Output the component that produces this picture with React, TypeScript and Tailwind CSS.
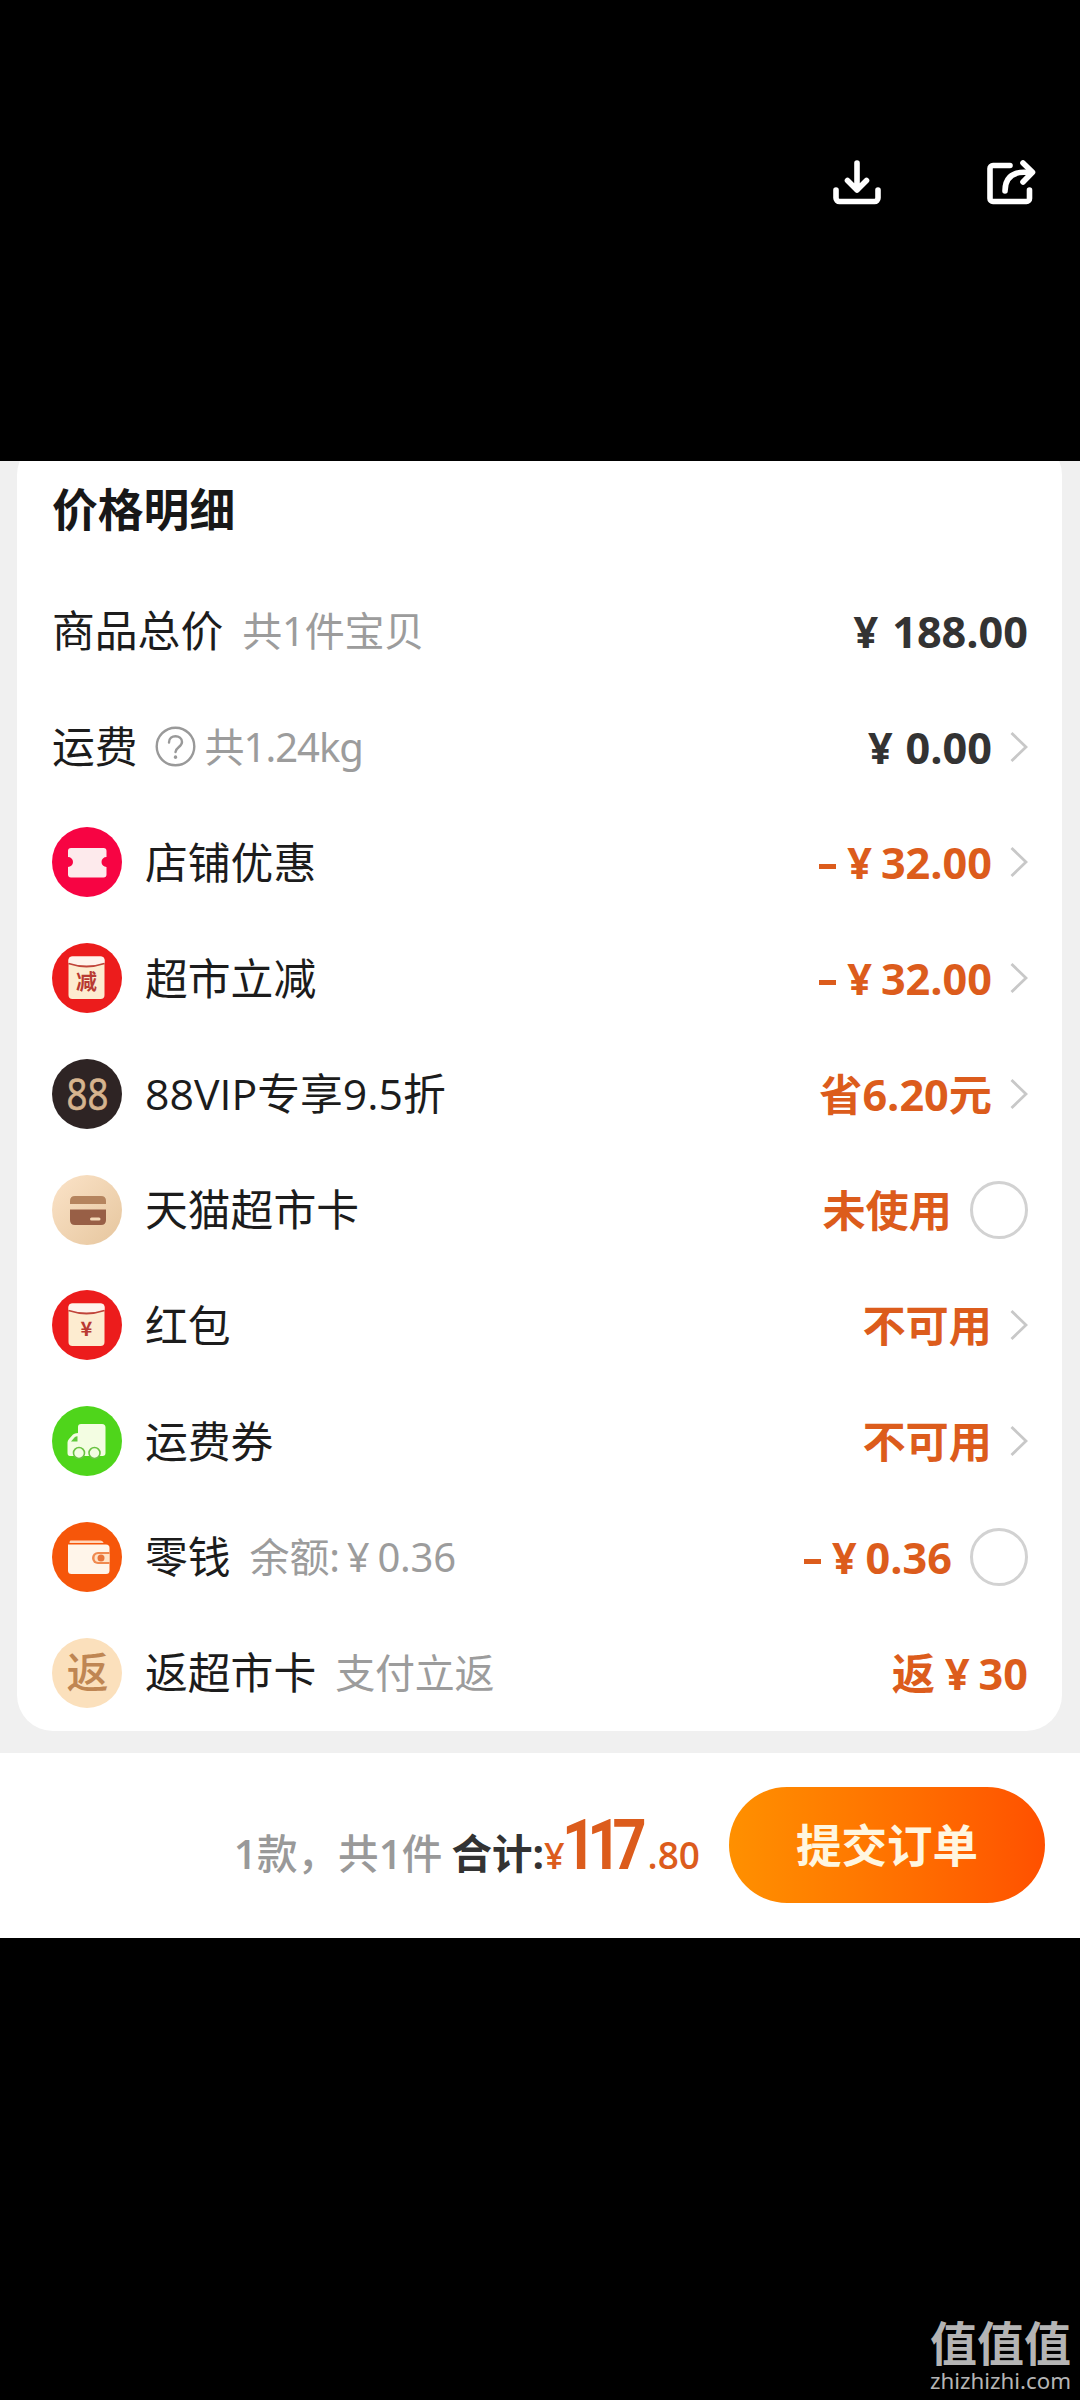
import type { ReactNode } from 'react'

type Row = {
  icon?: ReactNode
  label: string
  help?: boolean
  hint?: ReactNode
  value: ReactNode
  dark?: boolean
  end?: 'arrow' | 'radio'
}

const cjk = '"Noto Sans CJK SC", sans-serif'

function DownloadIcon() {
  return (
    <svg className="size-14" viewBox="0 0 56 56" fill="none" stroke="#fff" strokeWidth="5.6" strokeLinecap="round" strokeLinejoin="round">
      <path d="M28 8v27M18.500 25.500 28 35l9.500-9.500" />
      <path d="M7 35v8a3.500 3.500 0 0 0 3.500 3.500h35a3.500 3.500 0 0 0 3.500-3.500V35" />
    </svg>
  )
}

function ShareIcon() {
  return (
    <svg className="size-14" viewBox="0 0 56 56" fill="none" stroke="#fff" strokeWidth="5.6" strokeLinecap="round" strokeLinejoin="round">
      <path d="M28 10.500H11a3 3 0 0 0-3 3V43.500a3 3 0 0 0 3 3h33.500a3 3 0 0 0 3-3V35" />
      <path d="M23 36C23 24 29.500 17.200 42 17.200h7.500" />
      <path d="M41 8l9.500 9.200L41 27" />
    </svg>
  )
}

function TicketIcon() {
  return (
    <svg className="size-[70px]" viewBox="0 0 70 70">
      <circle cx="35" cy="35" r="35" fill="#f70443" />
      <path d="M19 21h32.500q3 0 3 3v6a5 5 0 0 0 0 10v7.500q0 3-3 3H19q-3 0-3-3V40a5 5 0 0 0 0-10v-6q0-3 3-3Z" fill="#fdeaec" />
    </svg>
  )
}

function EnvelopeIcon({ mark, size }: { mark: string; size: number }) {
  return (
    <svg className="size-[70px]" viewBox="0 0 70 70">
      <circle cx="35" cy="35" r="35" fill="#ec1c1c" />
      <rect x="16.500" y="13.500" width="36" height="42.500" rx="4" fill="#fdecd0" />
      <path d="M16.500 20v-2.500q0-4 4-4h28q4 0 4 4V20q-18 6-36 0Z" fill="#fff3ec" />
      <path d="M16.500 20.500q18 6 36 0" fill="none" stroke="#c0443a" strokeWidth="1.800" />
      <text x="34.500" y="45.500" textAnchor="middle" fontSize={size} fontWeight="700" fontFamily={cjk} fill="#b93a32">
        {mark}
      </text>
    </svg>
  )
}

function VipIcon() {
  return (
    <svg className="size-[70px]" viewBox="0 0 70 70">
      <circle cx="35" cy="35" r="35" fill="#2e2424" />
      <text x="14.500" y="50.500" fontSize="43" fontWeight="500" textLength="42" lengthAdjust="spacingAndGlyphs" fontFamily='"Open Sans", sans-serif' fill="#d6b48e" stroke="#d6b48e" strokeWidth="0.700">
        88
      </text>
    </svg>
  )
}

function CardIcon() {
  return (
    <svg className="size-[70px]" viewBox="0 0 70 70">
      <defs>
        <linearGradient id="card-bg" x1="0" y1="0" x2="1" y2="1">
          <stop offset="0" stopColor="#fbe3c8" />
          <stop offset="1" stopColor="#e6c69e" />
        </linearGradient>
      </defs>
      <circle cx="35" cy="35" r="35" fill="url(#card-bg)" />
      <path d="M18 29v-3q0-5 5-5h26q5 0 5 5v3Z" fill="#b5845e" />
      <path d="M18 34.500h36V45q0 5-5 5H23q-5 0-5-5Z" fill="#985f46" />
      <path d="M39.500 44H47" stroke="#f3d9b8" strokeWidth="3" strokeLinecap="round" />
    </svg>
  )
}

function TruckIcon() {
  return (
    <svg className="size-[70px]" viewBox="0 0 70 70">
      <circle cx="35" cy="35" r="35" fill="#4fd51b" />
      <path d="M29 18h21q3.500 0 3.500 3.500V47q0 3-3 3H18q-2.500 0-2.500-3V36.500q0-2 1.500-3.500l4-4.500q1.500-1.500 5-1.500V21q0-3 3-3Z" fill="#f3fde2" />
      <path d="M19 35.500l3.500-4q1.200-1.300 3-1.300v5.300Z" fill="#5fc93c" />
      <circle cx="27" cy="47" r="5.500" fill="#f3fde2" stroke="#69c243" strokeWidth="1.600" />
      <circle cx="42.500" cy="47" r="5.500" fill="#f3fde2" stroke="#69c243" strokeWidth="1.600" />
    </svg>
  )
}

function WalletIcon() {
  return (
    <svg className="size-[70px]" viewBox="0 0 70 70">
      <circle cx="35" cy="35" r="35" fill="#f6560a" />
      <path d="M18.500 18.500H48q3 0 3.500 2.500H17.500q0-2.500 1-2.500Z" fill="#ffd6bb" />
      <path d="M16 22.500h38q3.500 0 3.500 3.500v22.500q0 3.500-3.500 3.500H19.500q-3.500 0-3.500-3.500Z" fill="#fff5ea" />
      <path d="M57.500 30H46a6 6 0 0 0 0 12h11.500Z" fill="#f08a50" />
      <path d="M57.500 32H46.500a4 4 0 0 0 0 8h11Z" fill="#ffe3c8" />
      <circle cx="49" cy="36" r="3.500" fill="#e8743a" />
    </svg>
  )
}

function RebateIcon() {
  return (
    <svg className="size-[70px]" viewBox="0 0 70 70">
      <circle cx="35" cy="35" r="35" fill="#fbe0bc" />
      <text x="35.500" y="50" textAnchor="middle" fontSize="42" fontWeight="500" fontFamily={cjk} fill="#bf8653">
        返
      </text>
    </svg>
  )
}

function HelpIcon() {
  return (
    <svg className="ml-[17px] size-[41px]" viewBox="0 0 41 41" fill="none" stroke="#999" strokeWidth="2.400" strokeLinecap="round">
      <circle cx="20.500" cy="20.500" r="18.800" />
      <path d="M14 16.500c0-8.500 13-8 13-.5 0 5-6.500 5.500-6.500 10" />
      <path d="M20.500 31v.3" strokeWidth="3.400" />
    </svg>
  )
}

function Arrow() {
  return (
    <svg className="ml-[18px] h-[32px] w-[18px]" viewBox="0 0 18 32" fill="none" stroke="#c8c8c8" strokeWidth="2.800">
      <path d="M1.500 2 16 16 1.500 30" />
    </svg>
  )
}

function Price({ minus, yuan = 'mr-[9px]', children }: { minus?: boolean; yuan?: string; children: ReactNode }) {
  return (
    <>
      {minus && <span className="mr-[11px] mb-[6px] h-[5px] w-[17px] translate-y-[7px] self-center bg-[#dc5c1c]" />}
      <span className={yuan}>¥</span>
      <span>{children}</span>
    </>
  )
}

const rows: Row[] = [
  { label: '商品总价', hint: '共1件宝贝', value: <Price yuan="mr-[14px]">188.00</Price>, dark: true },
  { label: '运费', help: true, hint: '共1.24kg', value: <Price yuan="mr-[13px]">0.00</Price>, dark: true, end: 'arrow' },
  { icon: <TicketIcon />, label: '店铺优惠', value: <Price minus>32.00</Price>, end: 'arrow' },
  { icon: <EnvelopeIcon mark="减" size={21} />, label: '超市立减', value: <Price minus>32.00</Price>, end: 'arrow' },
  { icon: <VipIcon />, label: '88VIP专享9.5折', value: '省6.20元', end: 'arrow' },
  { icon: <CardIcon />, label: '天猫超市卡', value: '未使用', end: 'radio' },
  { icon: <EnvelopeIcon mark="¥" size={20} />, label: '红包', value: '不可用', end: 'arrow' },
  { icon: <TruckIcon />, label: '运费券', value: '不可用', end: 'arrow' },
  {
    icon: <WalletIcon />,
    label: '零钱',
    hint: (
      <>
        余额:<span className="mr-[8px] ml-[7px]">¥</span>0.36
      </>
    ),
    value: <Price minus>0.36</Price>,
    end: 'radio',
  },
  {
    icon: <RebateIcon />,
    label: '返超市卡',
    hint: '支付立返',
    value: (
      <>
        <span className="mr-[10px]">返</span>
        <Price>30</Price>
      </>
    ),
  },
]

function DetailRow({ icon, label, help, hint, value, dark, end }: Row) {
  return (
    <div className="flex h-[115.75px] items-center">
      {icon && <div className="mr-[23px] shrink-0">{icon}</div>}
      <span className="pt-[2px] text-[42.800px] leading-none text-[#1c1c1c]">{label}</span>
      {help && <HelpIcon />}
      {hint && (
        <span
          className={`pt-[1px] font-['Noto_Sans','Noto_Sans_CJK_SC',sans-serif] text-[40px] leading-none text-[#9c9c9c] ${help ? 'ml-[9px] tracking-[-1px]' : 'ml-[19px] tracking-[-0.2px]'}`}
        >
          {hint}
        </span>
      )}
      <div className={`ml-auto flex items-center pt-[1px] text-[43.200px] leading-none font-bold ${dark ? 'text-[#333]' : 'text-[#dc5c1c]'}`}>
        {value}
      </div>
      {end === 'arrow' && <Arrow />}
      {end === 'radio' && <span className="ml-[18px] size-[58px] rounded-full border-[3px] border-[#d2d2d2]" />}
    </div>
  )
}

export default function App() {
  return (
    <div className="flex h-[2400px] w-[1080px] flex-col overflow-hidden bg-black font-['Open_Sans','Noto_Sans_CJK_SC',sans-serif]">
      {/* Viewer toolbar */}
      <header className="flex h-[461px] shrink-0 items-start justify-end gap-[97px] pt-[155px] pr-[42px]">
        <DownloadIcon />
        <ShareIcon />
      </header>

      {/* Price details */}
      <main className="h-[1292px] shrink-0 overflow-hidden bg-[#f0f0f0]">
        <section className="-mt-[22px] mr-[18px] ml-[17px] rounded-[36px] bg-white pt-[22px] pr-[34px] pl-[35px]">
          <h1 className="flex h-[112px] items-start pt-[26px] text-[45.800px] leading-none font-bold text-[#181818]">价格明细</h1>
          {rows.map((row) => (
            <DetailRow key={row.label} {...row} />
          ))}
        </section>
      </main>

      {/* Order bar */}
      <footer className="flex h-[185px] shrink-0 items-start justify-end bg-white pt-[34px] pr-[35px]">
        <div className="flex h-[116px] items-baseline pt-[23px] leading-none">
          <span className="text-[40.600px] font-medium text-[#999]">
            <span className="font-semibold">1</span>款，共<span className="font-semibold">1</span>件
          </span>
          <span className="ml-[9px] text-[40.500px] font-bold text-[#333]">合计:</span>
          <span className="text-[36px] font-semibold text-[#dc5c1c]">¥</span>
          <span className="-ml-[3px] origin-left scale-x-85 font-['Roboto',sans-serif] text-[70px] font-bold tracking-[-10.500px] text-[#dc5c1c]">
            117
          </span>
          <span className="-ml-[3px] text-[37px] font-semibold text-[#dc5c1c]">.80</span>
        </div>
        <button className="ml-[29px] h-[116px] w-[316px] rounded-full bg-linear-to-r from-[#ff9000] to-[#ff5000] pt-[2px] text-[45.500px] leading-none font-bold text-[#fff6e0]">
          提交订单
        </button>
      </footer>

      {/* Watermark */}
      <div className="mt-auto flex flex-col items-end pr-[9px] pb-[5px] text-[#b4b4b4]">
        <span className="mb-[3px] font-['Noto_Sans_CJK_SC',sans-serif] text-[47px] leading-none font-bold">值值值</span>
        <span className="font-['Noto_Sans',sans-serif] text-[22.300px] leading-[28px]">zhizhizhi.com</span>
      </div>
    </div>
  )
}
